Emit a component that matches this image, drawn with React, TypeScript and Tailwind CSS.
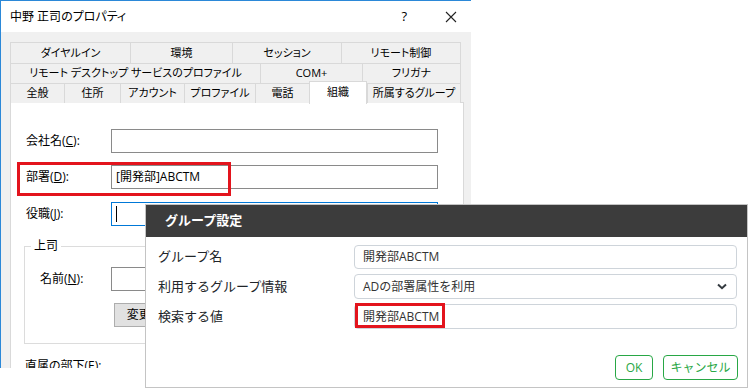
import React from "react";

const Tab = ({ label, w, last }: { label: string; w: number; last?: boolean }) => (
  <div
    className={`h-full flex items-center justify-center border-t border-l border-[#d9d9d9] bg-[#f0f0f0] text-[11px] ${last ? "border-r" : ""}`}
    style={{ width: w }}
  >
    {label}
  </div>
);

export default function App() {
  return (
    <div className="relative w-[752px] h-[391px] bg-white overflow-hidden [font-family:'Open_Sans','Noto_Sans_CJK_JP',sans-serif]">
      {/* Main properties dialog */}
      <div className="w-[471px] h-[368px] border-l border-t border-[#2b88d8] bg-[#f0f0f0] flex flex-col overflow-hidden text-[12px] text-black [font-feature-settings:'palt']">
        <div className="h-[31px] shrink-0 bg-white flex items-center pl-[9px]">
          <span>中野 正司のプロパティ</span>
          <span className="ml-auto mr-[38px] text-[13px]">?</span>
          <svg width="12" height="12" viewBox="0 0 12 12" className="mr-[14px]">
            <path d="M1 1L11 11M11 1L1 11" stroke="#222" strokeWidth="1.1" />
          </svg>
        </div>
        <div className="pl-[9px] pt-[10px] flex flex-col flex-1">
          <div className="flex h-[21px]">
            <Tab label="ダイヤルイン" w={120} />
            <Tab label="環境" w={102} />
            <Tab label="セッション" w={109} />
            <Tab label="リモート制御" w={120} last />
          </div>
          <div className="flex h-[20px]">
            <Tab label="リモート デスクトップ サービスのプロファイル" w={250} />
            <Tab label="COM+" w={102} />
            <Tab label="フリガナ" w={99} last />
          </div>
          <div className="flex h-[20px] relative z-10">
            <Tab label="全般" w={54} />
            <Tab label="住所" w={56} />
            <Tab label="アカウント" w={64} />
            <Tab label="プロファイル" w={71} />
            <Tab label="電話" w={54} />
            <div className="w-[58px] h-[23px] -mt-[2px] bg-white border-t border-l border-r border-[#d9d9d9] flex justify-center pt-[2px] text-[11px]">
              組織
            </div>
            <Tab label="所属するグループ" w={94} last />
          </div>
          <div className="w-[454px] flex-1 -mt-px bg-white border border-[#d9d9d9] pt-[26px] pl-[15px] flex flex-col">
            <div className="flex items-center h-[24px]">
              <span className="w-[85px]">
                会社名(<u>C</u>):
              </span>
              <div className="w-[327px] h-[24px] border border-[#8a8a8a]" />
            </div>
            <div className="flex items-center h-[24px] mt-[12px]">
              <span className="w-[85px]">
                部署(<u>D</u>):
              </span>
              <div className="w-[327px] h-[24px] border border-[#8a8a8a] flex items-center pl-[4px] text-[12px]">
                [開発部]ABCTM
              </div>
            </div>
            <div className="flex items-center h-[24px] mt-[13px]">
              <span className="w-[85px]">
                役職(<u>J</u>):
              </span>
              <div className="w-[327px] h-[24px] border border-[#0078d7] flex items-center pl-[4px]">
                <div className="w-px h-[16px] bg-black" />
              </div>
            </div>
            <div className="relative w-[414px] h-[98px] -ml-[2px] mt-[20px] shrink-0 border border-[#dcdcdc]">
              <span className="absolute -top-[9px] left-[6px] bg-white px-[3px] leading-[16px]">上司</span>
              <div className="flex items-center h-[24px] mt-[20px] pl-[15px]">
                <span className="w-[71px]">
                  名前(<u>N</u>):
                </span>
                <div className="w-[300px] h-[24px] border border-[#8a8a8a]" />
              </div>
              <div className="ml-[89px] mt-[12px] w-[75px] h-[24px] border border-[#adadad] bg-[#e1e1e1] flex items-center justify-center">
                変更(<u>G</u>)...
              </div>
            </div>
            <div className="mt-[13px] -ml-[1px]">
              直属の部下(<u>E</u>):
            </div>
          </div>
        </div>
      </div>

      {/* Red highlight on 部署 */}
      <div className="absolute left-[17px] top-[162px] w-[214px] h-[34px] border-[3px] border-[#e3141d]" />

      {/* Group settings dialog */}
      <div className="absolute left-[145px] top-[204px] w-[603px] h-[184px] border border-[#c4c4c4] bg-white flex flex-col text-[13px] text-[#212529]">
        <div className="h-[32px] shrink-0 bg-[#3c3c3c] flex items-center pl-[19px] text-white font-bold text-[13px]">
          グループ設定
        </div>
        <div className="pt-[8px] pl-[12px] pr-[10px] flex flex-col gap-[5px]">
          <div className="grid grid-cols-[196px_383px] items-center">
            <span>グループ名</span>
            <div className="h-[24px] rounded-[4px] border border-[#ced4da] flex items-center pl-[8px] text-[12px] text-[#333]">
              開発部ABCTM
            </div>
          </div>
          <div className="grid grid-cols-[196px_383px] items-center">
            <span>利用するグループ情報</span>
            <div className="h-[25px] rounded-[4px] border border-[#ced4da] flex items-center pl-[8px] pr-[9px] text-[12px] text-[#333]">
              <span>ADの部署属性を利用</span>
              <svg width="10" height="7" viewBox="0 0 10 7" className="ml-auto">
                <path d="M1 1.5L5 5.2L9 1.5" fill="none" stroke="#343a40" strokeWidth="2" />
              </svg>
            </div>
          </div>
          <div className="grid grid-cols-[196px_383px] items-center">
            <span>検索する値</span>
            <div className="h-[25px] rounded-[4px] border border-[#ced4da] flex items-center pl-[8px] text-[12px] text-[#333]">
              開発部ABCTM
            </div>
          </div>
        </div>
        <div className="flex justify-end gap-[10px] pr-[9px] mt-[26px]">
          <div className="w-[38px] h-[25px] rounded-[4px] border border-[#28a745] text-[#28a745] text-[12px] flex items-center justify-center">
            OK
          </div>
          <div className="w-[75px] h-[25px] rounded-[4px] border border-[#28a745] text-[#28a745] text-[12px] flex items-center justify-center">
            キャンセル
          </div>
        </div>
      </div>

      {/* Red highlight on 検索する値 */}
      <div className="absolute left-[355px] top-[303px] w-[90px] h-[25px] border-[3px] border-[#e3141d]" />
    </div>
  );
}
